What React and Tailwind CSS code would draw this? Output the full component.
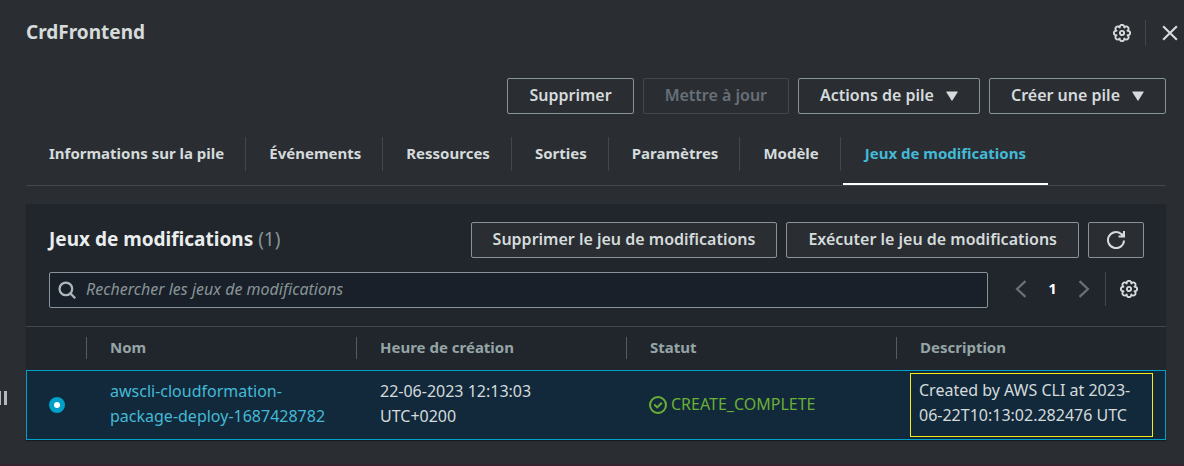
function SettingsIcon() {
  return (
    <svg viewBox="0 0 18 18" className="size-[18px]" fill="none" stroke="currentColor" strokeWidth="1.9" strokeLinejoin="round" aria-hidden="true">
      <path d="M6.7 3.5A2.32 2.32 0 1 1 11.3 3.5A2.32 2.32 0 1 1 14.5 6.7A2.32 2.32 0 1 1 14.5 11.3A2.32 2.32 0 1 1 11.3 14.5A2.32 2.32 0 1 1 6.7 14.5A2.32 2.32 0 1 1 3.5 11.3A2.32 2.32 0 1 1 3.5 6.7A2.32 2.32 0 1 1 6.7 3.5Z" />
      <circle cx="9" cy="9" r="2.1" />
    </svg>
  );
}

function CloseIcon() {
  return (
    <svg viewBox="0 0 16 16" className="size-[18px]" fill="none" stroke="currentColor" strokeWidth="1.9" aria-hidden="true">
      <path d="M1.9 1.9l12.2 12.2M14.1 1.9L1.9 14.1" />
    </svg>
  );
}

function SearchIcon() {
  return (
    <svg viewBox="0 0 16 16" className="size-[18px] text-[#aab7b8]" fill="none" stroke="currentColor" strokeWidth="2" aria-hidden="true">
      <circle cx="7" cy="7" r="5.6" />
      <path d="M11 11l4.3 4.3" />
    </svg>
  );
}

function RefreshIcon() {
  return (
    <svg viewBox="0 0 18 18" className="size-[18px]" fill="none" stroke="currentColor" strokeWidth="2" aria-hidden="true">
      <path d="M17 9.5A8 8 0 1 1 14.2 3l2 2" />
      <path d="M17 0v5.5h-5.5" />
      <path d="M14 3l3-1v3.5h-3z" fill="currentColor" stroke="none" />
    </svg>
  );
}

function ChevronIcon({ direction }) {
  return (
    <svg viewBox="0 0 16 16" className="size-[18px]" fill="none" stroke="currentColor" strokeWidth="2" aria-hidden="true">
      <path d={direction === "left" ? "M12 1L4.5 8l7.5 7" : "M4 1l7.5 7L4 15"} />
    </svg>
  );
}

function CheckCircleIcon() {
  return (
    <svg viewBox="0 0 16 16" className="size-[18px]" fill="none" stroke="currentColor" strokeWidth="1.8" aria-hidden="true">
      <circle cx="8" cy="8" r="7.1" />
      <path d="M4.7 7.6l2.6 2.5 4.1-4.1" />
    </svg>
  );
}

function CaretDown() {
  return (
    <svg viewBox="0 0 12 10" className="mt-[3px] h-[10px] w-[12px]" fill="currentColor" aria-hidden="true">
      <path d="M.8.5h10.4a.5.5 0 0 1 .4.8L6.4 9.5a.5.5 0 0 1-.8 0L.4 1.3A.5.5 0 0 1 .8.5Z" />
    </svg>
  );
}

function Button({ children, disabled, caret }) {
  return (
    <button
      type="button"
      disabled={disabled}
      className="flex h-9 items-center gap-3 whitespace-nowrap rounded-xs border border-[#879596] bg-[#2a2e33] px-[21px] pb-[3px] font-semibold text-[#d5dbdb] disabled:border-[#414750] disabled:text-[#687078]"
    >
      {children}
      {caret && <CaretDown />}
    </button>
  );
}

const TABS = [
  "Informations sur la pile",
  "Événements",
  "Ressources",
  "Sorties",
  "Paramètres",
  "Modèle",
  "Jeux de modifications",
];

function Tabs() {
  return (
    <div role="tablist" className="mt-4 flex border-b border-[#414750] text-[15px] font-bold">
      {TABS.map((tab, i) => {
        const active = i === TABS.length - 1;
        return (
          <div key={tab} className="flex">
            <button
              type="button"
              role="tab"
              aria-selected={active}
              className={
                active
                  ? "ml-[2px] h-[55px] whitespace-nowrap border-b-2 border-white px-[22px] pb-[6px] text-[#44b9d6]"
                  : "h-[55px] whitespace-nowrap pl-[23px] pr-[21px] pb-2 text-[#d5dbdb]"
              }
            >
              {tab}
            </button>
            {!active && <span className="mt-[7px] h-[34px] w-px bg-[#414750]" />}
          </div>
        );
      })}
    </div>
  );
}

const COLUMNS = ["Nom", "Heure de création", "Statut", "Description"];

function ChangeSetTable() {
  return (
    <table className="w-full table-fixed border-t border-[#414750] text-left">
      <thead>
        <tr className="h-[43px] text-[15px] text-[#95a5a6]">
          <th className="w-[60px]" aria-label="Sélection" />
          {COLUMNS.map((name) => (
            <th key={name} className="font-bold">
              <div className="h-[22px] border-l border-[#545b64] pl-[23px] leading-5">{name}</div>
            </th>
          ))}
        </tr>
      </thead>
      <tbody>
        <tr className="h-[70px] bg-[#12293b] leading-[25px] text-[#d5dbdb] outline outline-1 -outline-offset-1 outline-[#00a1c9]">
          <td className="pl-[23px]">
            <input
              type="radio"
              name="changeset"
              defaultChecked
              aria-label="awscli-cloudformation-package-deploy-1687428782"
              className="block size-4 appearance-none rounded-full border-5 border-[#00a1c9] bg-white"
            />
          </td>
          <td className="pb-[2px] pl-6 pr-5">
            <a href="#changeset" className="text-[#44b9d6]">awscli-cloudformation-package-deploy-1687428782</a>
          </td>
          <td className="pb-[2px] pl-6 pr-20">22-06-2023 12:13:03 UTC+0200</td>
          <td className="pl-[23px]">
            <span className="flex items-center gap-1 text-[#6aaf35]">
              <CheckCircleIcon />
              CREATE_COMPLETE
            </span>
          </td>
          <td className="pl-[14px] pr-[13px]">
            <div className="border border-[#f7ec13] pb-2 pl-2 pr-4 pt-1">
              Created by AWS CLI at 2023-<wbr />06-22T10:13:02.282476 UTC
            </div>
          </td>
        </tr>
      </tbody>
    </table>
  );
}

export default function App() {
  return (
    <div className="flex min-h-screen border-b-2 border-[#35242f] bg-[#2a2e33] font-['Noto_Sans','Open_Sans',sans-serif] text-base text-[#d5dbdb]">
      <div className="flex w-[26px] shrink-0 items-start pt-[391px]" aria-hidden="true">
        <span className="h-[14px] w-px bg-[#b4baba]" />
        <span className="ml-[3px] h-[14px] w-[3px] bg-[#b4baba]" />
      </div>
      <main className="min-w-0 flex-1">
        <header className="flex h-[66px] items-center justify-between pr-[5px]">
          <h2 className="pb-[2px] text-[19px] font-bold">CrdFrontend</h2>
          <div className="flex items-center">
            <button type="button" aria-label="Préférences"><SettingsIcon /></button>
            <span className="ml-[14px] mr-[15px] h-[26px] w-px bg-[#414750]" />
            <button type="button" aria-label="Fermer"><CloseIcon /></button>
          </div>
        </header>
        <div className="pr-[18px] pt-3">
          <div className="flex justify-end gap-[9px]">
            <Button>Supprimer</Button>
            <Button disabled>Mettre à jour</Button>
            <Button caret>Actions de pile</Button>
            <Button caret>Créer une pile</Button>
          </div>
          <Tabs />
          <section className="mt-[18px] bg-[#21252c] shadow-[0_1px_1px_rgba(0,0,0,0.4)]">
            <div className="flex items-center justify-between pl-[23px] pr-[22px] pt-[18px]">
              <h3 className="pb-[2px] text-[19px] font-bold text-[#eaeded]">
                Jeux de modifications <span className="font-normal text-[#879596]">(1)</span>
              </h3>
              <div className="flex gap-[9px]">
                <Button>Supprimer le jeu de modifications</Button>
                <Button>Exécuter le jeu de modifications</Button>
                <button
                  type="button"
                  aria-label="Actualiser"
                  className="flex h-9 w-14 items-center justify-center rounded-xs border border-[#879596] bg-[#2a2e33]"
                >
                  <RefreshIcon />
                </button>
              </div>
            </div>
            <div className="flex items-start px-[23px] pb-[18px] pt-[14px]">
              <label className="flex h-9 flex-1 items-center gap-[10px] rounded-xs border border-[#879596] bg-[#1a2029] px-2">
                <SearchIcon />
                <input
                  type="text"
                  aria-label="Rechercher les jeux de modifications"
                  placeholder="Rechercher les jeux de modifications"
                  className="min-w-0 flex-1 bg-transparent pb-[2px] italic outline-none placeholder:text-[#879596]"
                />
              </label>
              <div className="flex h-[34px] items-center pl-6 text-[#687078]">
                <button type="button" disabled aria-label="Page précédente"><ChevronIcon direction="left" /></button>
                <button type="button" className="w-[45px] pb-[2px] text-[15px] font-bold text-white">1</button>
                <button type="button" disabled aria-label="Page suivante"><ChevronIcon direction="right" /></button>
              </div>
              <span className="ml-3 mr-[14px] h-[34px] w-px bg-[#414750]" />
              <button type="button" aria-label="Préférences du tableau" className="mr-[5px] flex h-[34px] items-center"><SettingsIcon /></button>
            </div>
            <ChangeSetTable />
          </section>
        </div>
      </main>
    </div>
  );
}
